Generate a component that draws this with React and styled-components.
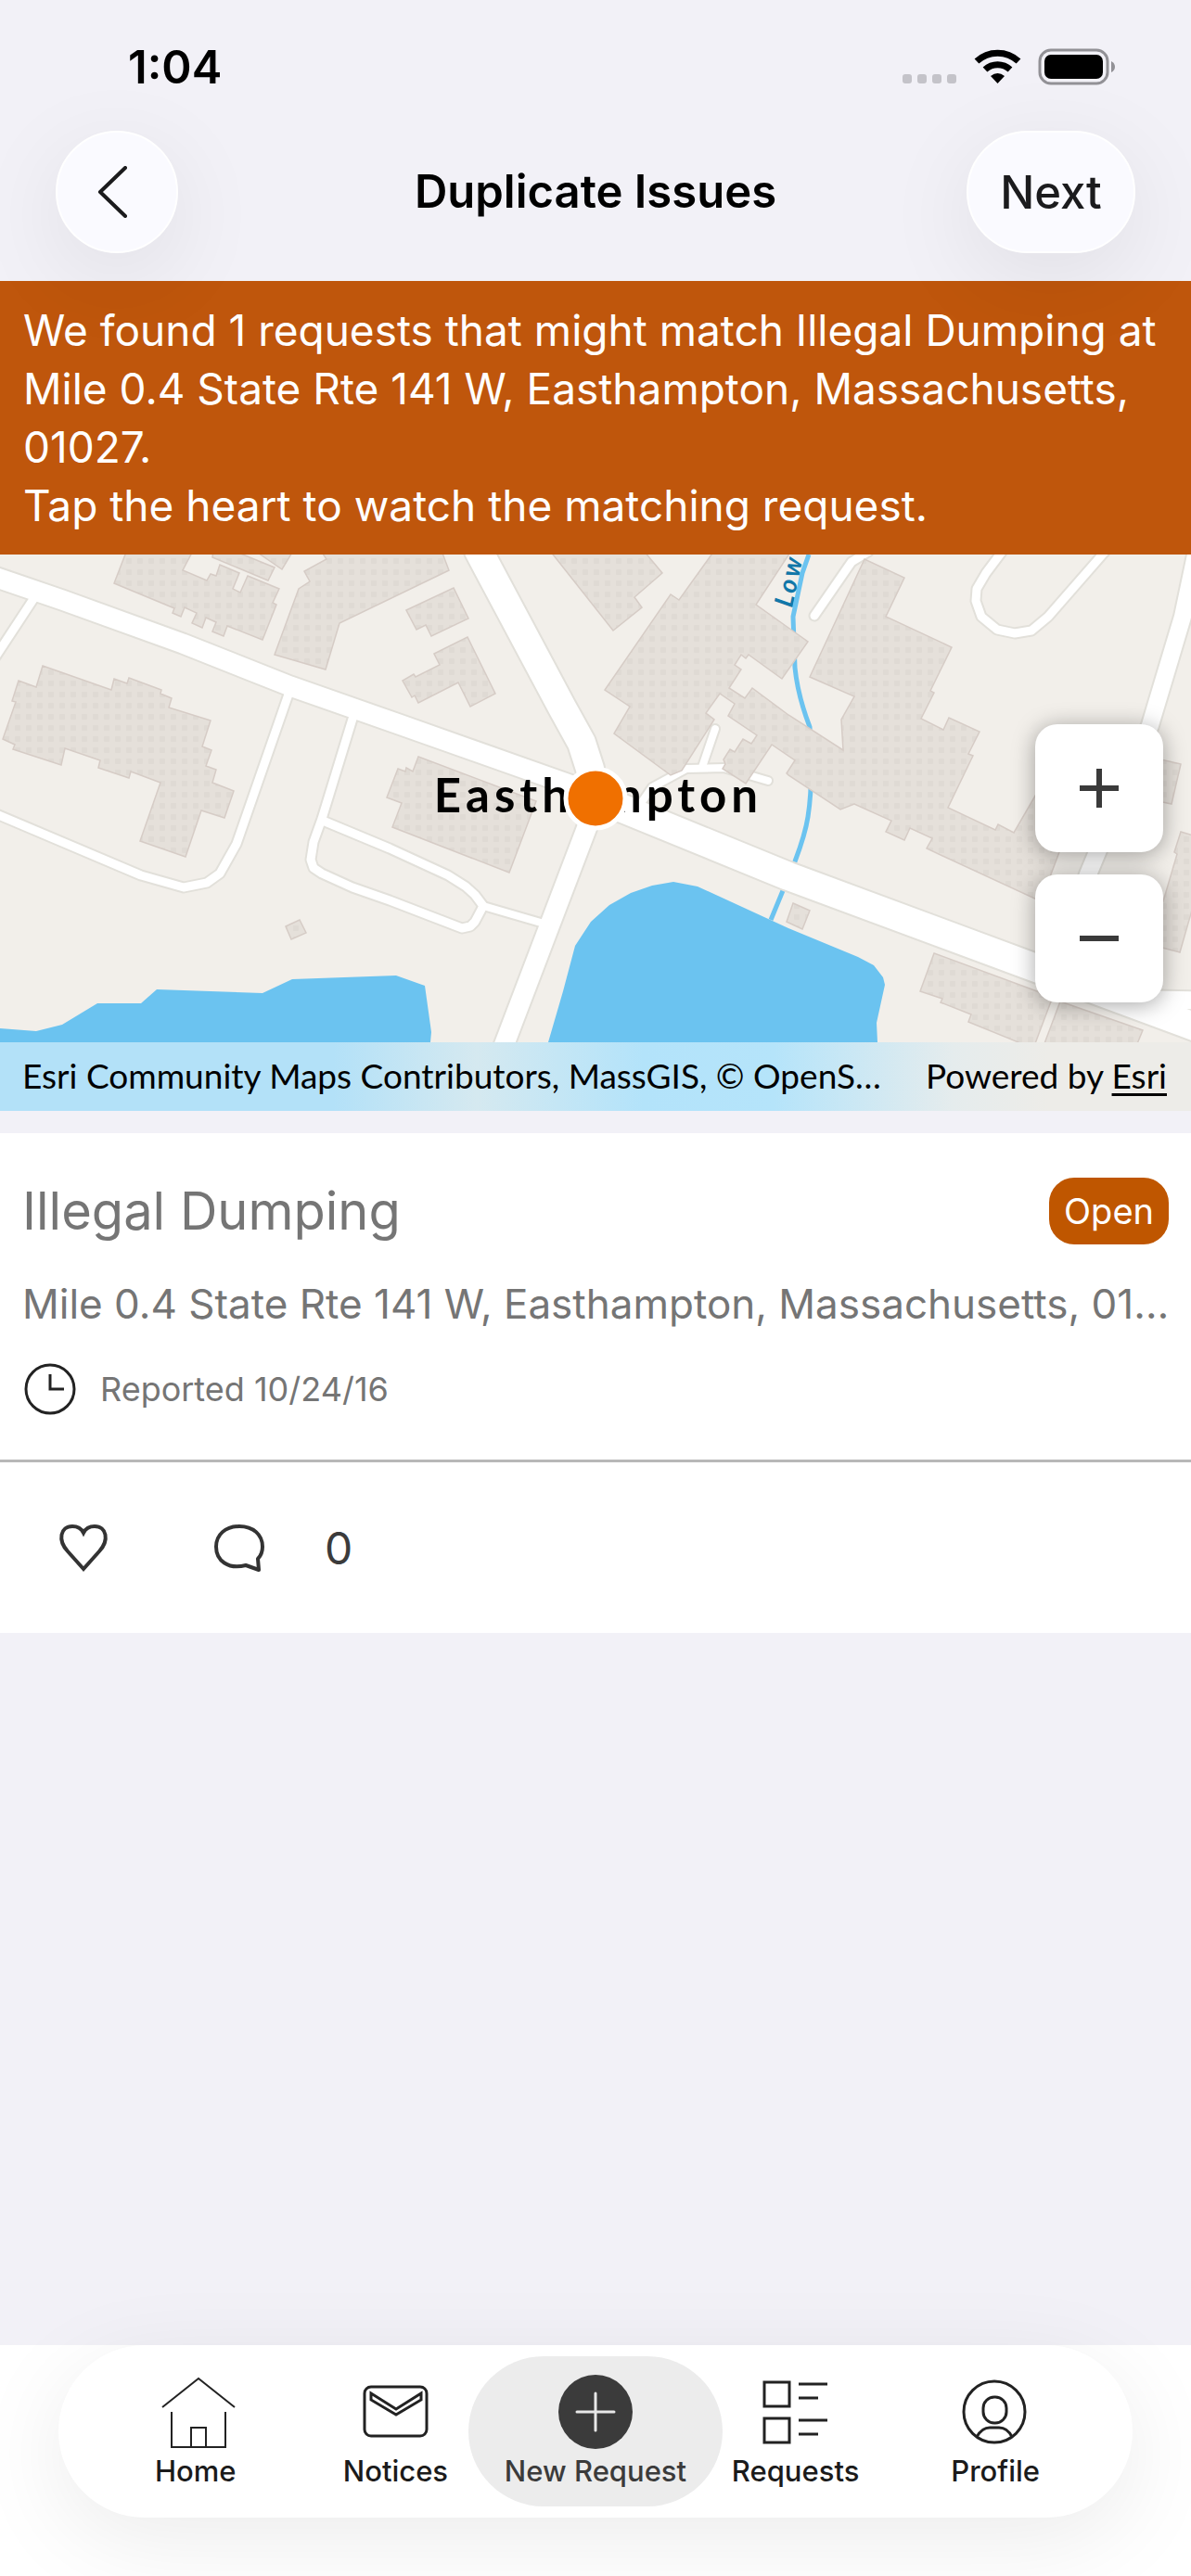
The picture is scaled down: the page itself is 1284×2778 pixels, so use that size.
import styled, { createGlobalStyle } from 'styled-components'

const tabs = [
    { id: 1, title: 'Home', icon: HomeIcon },
    { id: 2, title: 'Notices', icon: NoticesIcon },
    { id: 3, title: 'New Request', icon: PlusIcon, active: true },
    { id: 4, title: 'Requests', icon: RequestsIcon },
    { id: 5, title: 'Profile', icon: ProfileIcon },
]

const buildings = [
    '135,0 123,31 188,58 186,63 195,67 199,57 212,63 207,74 218,79 222,68 233,73 229,83 241,88 245,77 283,92 298,54 294,52 301,37 267,23 259,41 251,37 258,20 237,11 233,23 227,21 223,28 197,17 209,-6 137,-6',
    '230,-4 229,3 289,28 296,14 252,-4',
    '275,-4 304,16 316,-4',
    '346,-4 352,5 328,18 334,29 322,37 296,108 351,124 366,74 484,17 476,-4',
    '46,120 120,146 123,134 137,139 139,133 174,146 173,150 185,155 182,165 227,179 218,207 228,211 222,228 233,232 229,246 252,255 242,284 217,276 200,326 151,309 173,246 141,234 139,241 106,230 108,222 70,209 66,227 14,210 16,205 3,199 17,159 13,158 20,136 39,143',
    '308,401 323,394 330,408 314,415',
    '438,60 489,36 505,69 465,88 459,76 449,81',
    '468,107 504,89 534,150 507,164 494,138 451,160 447,152 444,154 434,136 446,129 448,132 474,119',
    '451,218 578,266 549,343 423,294 433,268 417,262 429,231 437,234 438,230 445,234',
    '593,-4 661,82 692,57 684,46 714,20 694,-4',
    '770,-4 732,49 723,43 652,146 679,164 662,193 723,238 735,233 770,178 761,171 776,150 792,161 785,174 816,195 810,204 801,199 792,213 787,210 780,221 782,226 779,231 804,247 832,205 857,222 848,236 850,238 906,275 921,269 961,287 955,299 975,308 981,295 1005,306 999,317 1122,374 1142,321 1168,255 1130,236 1093,300 1076,291 1073,297 1022,273 1049,217 1044,215 1056,191 1023,176 1017,189 993,177 1007,149 1003,147 1026,100 955,67 975,25 932,5 873,132 921,153 907,178 909,211 850,173 811,144 803,155 786,144 799,124 792,119 799,108 804,112 807,108 843,134 871,94 850,79 815,54 853,-4',
    '1230,216 1273,226 1263,269 1230,262',
    '1273,299 1290,304 1290,366 1272,429 1230,418 1254,374 1269,323 1266,321',
    '1007,430 1118,471 1133,482 1115,530 1100,530 1098,526 1044,504 1047,496 1014,483 1016,479 992,471',
    '1143,482 1232,513 1225,530 1125,530',
    '855,376 873,384 865,404 848,396',
]

const roads = [
    { d: 'M40 42 L-6 112', width: 9 },
    { d: 'M313 145 L255 312 L237 344 L223 354 L198 359 L152 346 L-6 279', width: 9 },
    { d: 'M381 174 L347 285 L338 310 L335 329 L338 338 L347 344 L380 359 L420 373 L498 403 L507 401 L512 396 L521 379 L512 367 L502 358 L483 346 L420 317 L348 287', width: 9 },
    { d: 'M521 379 L583 397', width: 8 },
    { d: 'M687 274 L703 251 L740 231 L780 230 L828 244', width: 8 },
    { d: 'M757 229 L771 188', width: 8 },
    { d: 'M878 66 L918 8 L936 -3', width: 9 },
    { d: 'M1081 -4 L1063 20 L1053 37 L1052 50 L1058 67 L1075 81 L1094 85 L1112 82 L1130 67 L1192 -4', width: 9 },
    { d: 'M1290 -4 L1275 67 L1240 184 L1173 345 L1140 440', width: 18 },
    { d: 'M1244 480 L1290 481', width: 19 },
    { d: 'M-6 24 L67 49 L197 96 L313 142 L430 183 L642 258', width: 21 },
    { d: 'M516 -4 L606 165 L627 203 L636 231 L642 262 L850 347 L1117 446 L1290 510', width: 30 },
    { d: 'M642 270 L543 530', width: 21 },
]

function HomeIcon() {
    return (
        <Icon viewBox="0 0 80 80" $stroke={2}>
            <path d="M4 35 L43 4 L82 35" />
            <path d="M14 40 V78 H72 V40" />
            <path d="M35 78 V57 H51 V78" />
        </Icon>
    )
}

function NoticesIcon() {
    return (
        <Icon viewBox="0 0 80 80" $stroke={3}>
            <rect x="7" y="13" width="67" height="53" rx="7" />
            <path d="M14 20 L41 37 L68 20 V27 L41 43 L14 27 Z" />
        </Icon>
    )
}

function PlusIcon() {
    return (
        <Icon viewBox="0 0 80 80" $stroke={3}>
            <circle cx="40" cy="40" r="40" fill="#3b3b3b" stroke="none" />
            <path d="M20 40 H60 M40 20 V60" stroke="#e8e8e8" strokeLinecap="round" />
        </Icon>
    )
}

function RequestsIcon() {
    return (
        <Icon viewBox="0 0 80 80" $stroke={3}>
            <path d="M6 8 H33 V34 H6 Z M6 47 H33 V73 H6 Z" />
            <path d="M43 10 H74 M43 25 H64 M43 49 H74 M43 64 H64" />
        </Icon>
    )
}

function ProfileIcon() {
    return (
        <Icon viewBox="0 0 80 80" $stroke={3}>
            <circle cx="39" cy="40" r="33" />
            <rect x="27" y="24" width="25" height="28" rx="12" />
            <path d="M20 67 C24 60 28 57 34 57 H44 C50 57 55 61 58 67" />
        </Icon>
    )
}

function StatusBar() {
    return (
        <StatusRow>
            <Time>1:04</Time>
            <svg width="230" height="40" viewBox="0 0 230 40">
                <g fill="#c4c3c9">
                    <rect x="0" y="28" width="10" height="10" rx="3" />
                    <rect x="16" y="28" width="10" height="10" rx="3" />
                    <rect x="32" y="28" width="10" height="10" rx="3" />
                    <rect x="48" y="28" width="10" height="10" rx="3" />
                </g>
                <g fill="none" stroke="#000" strokeWidth="7">
                    <path d="M80 14 A33 33 0 0 1 125 14" />
                    <path d="M89 23 A20 20 0 0 1 116 23" />
                </g>
                <path d="M95 30 Q102.500 24 110 30 L102.500 38 Z" />
                <rect x="148" y="2" width="73" height="36" rx="12" fill="none" stroke="#929196" strokeWidth="3" />
                <rect x="153" y="7" width="63" height="26" rx="7" />
                <path d="M225 14 Q229 16 229 20 Q229 24 225 26 Z" fill="#929196" />
            </svg>
        </StatusRow>
    )
}

function MapView() {
    return (
        <MapBox>
            <MapDrawing viewBox="0 0 1284 526" preserveAspectRatio="xMidYMid slice">
                <defs>
                    <pattern id="dots" width="12" height="12" patternUnits="userSpaceOnUse">
                        <rect width="12" height="12" fill="#e5e0da" />
                        <rect x="4" y="4" width="6" height="6" rx="1" fill="#dfdad4" />
                    </pattern>
                </defs>
                <rect width="1284" height="526" fill="#f2efea" />
                <g fill="#6bc3f0">
                    <path d="M0 511 L39 514 L67 507 L105 484 L152 484 L169 469 L283 473 L315 458 L427 454 L458 465 L465 515 L464 526 L0 526 Z" />
                    <path d="M591 526 L607 471 L620 422 L637 396 L657 378 L680 365 L703 357 L726 353 L752 358 L850 403 L925 434 L942 443 L952 456 L954 464 L945 505 L946 526 Z" />
                </g>
                <path d="M872 0 L865 20 L855 67 L857 122 Q860 152 873 186 Q877 245 871 283 Q868 302 857 331 L831 394" fill="none" stroke="#6bc3f0" strokeWidth="5" />
                <g fill="none" stroke="#e2e0da" strokeLinecap="round" strokeLinejoin="round">
                    {roads.map((road) => <path key={road.d} d={road.d} strokeWidth={road.width + 4} />)}
                </g>
                <g fill="none" stroke="#fff" strokeLinecap="round" strokeLinejoin="round">
                    {roads.map((road) => <path key={road.d} d={road.d} strokeWidth={road.width} />)}
                </g>
                <g fill="url(#dots)" stroke="#d6ccc6" strokeWidth="1.500">
                    {buildings.map((points) => <polygon key={points} points={points} />)}
                </g>
                <RiverLabel x="854" y="58" transform="rotate(-78 854 58)">Low</RiverLabel>
                <TownLabel x="645" y="278" textAnchor="middle">Easthampton</TownLabel>
                <circle cx="642" cy="263" r="32" fill="#f07000" stroke="#fff" strokeWidth="5" />
            </MapDrawing>
            <ZoomControls>
                <ZoomButton aria-label="Zoom in">
                    <svg width="42" height="42" viewBox="0 0 42 42" stroke="#3a3a3a" strokeWidth="6">
                        <path d="M0 21 H42 M21 0 V42" />
                    </svg>
                </ZoomButton>
                <ZoomButton aria-label="Zoom out">
                    <svg width="42" height="42" viewBox="0 0 42 42" stroke="#3a3a3a" strokeWidth="6">
                        <path d="M0 21 H42" />
                    </svg>
                </ZoomButton>
            </ZoomControls>
            <Attribution>
                <span>Esri Community Maps Contributors, MassGIS, © OpenS…</span>
                <span>Powered by <a href="#esri">Esri</a></span>
            </Attribution>
        </MapBox>
    )
}

function RequestCard() {
    return (
        <Card>
            <CardBody>
                <CardTop>
                    <CardTitle>Illegal Dumping</CardTitle>
                    <Badge>Open</Badge>
                </CardTop>
                <Address>Mile 0.4 State Rte 141 W, Easthampton, Massachusetts, 01…</Address>
                <Reported>
                    <svg width="56" height="56" viewBox="0 0 56 56" fill="none" stroke="#222" strokeWidth="3">
                        <circle cx="28" cy="28" r="26" />
                        <path d="M28 12 V28 H43" />
                    </svg>
                    <span>Reported 10/24/16</span>
                </Reported>
            </CardBody>
            <CardActions>
                <IconButton aria-label="Watch request">
                    <svg width="56" height="56" viewBox="0 0 56 56" fill="none" stroke="#333" strokeWidth="4">
                        <path d="M28 51 L11 32 C0 20 3 5 16 5 C22 5 26 8 28 12 C30 8 34 5 40 5 C53 5 56 20 45 32 Z" />
                    </svg>
                </IconButton>
                <IconButton aria-label="Comments">
                    <svg width="56" height="56" viewBox="0 0 56 56" fill="none" stroke="#333" strokeWidth="4" strokeLinejoin="round">
                        <path d="M35 47 C16 52 3 42 3 27 C3 14 13 5 28 5 C43 5 53 14 53 27 C53 32 51 37 48 40 L49 52 Z" />
                    </svg>
                    <span>0</span>
                </IconButton>
            </CardActions>
        </Card>
    )
}

function App() {
    return (
        <Page>
            <GlobalStyle />
            <Header>
                <StatusBar />
                <NavBar>
                    <BackButton aria-label="Back">
                        <svg width="34" height="56" viewBox="0 0 34 56" fill="none" stroke="#1b1b1d" strokeWidth="4" strokeLinecap="round" strokeLinejoin="round">
                            <path d="M31 2 L4 28 L31 54" />
                        </svg>
                    </BackButton>
                    <h1>Duplicate Issues</h1>
                    <NextButton>Next</NextButton>
                </NavBar>
            </Header>
            <Banner>
                <p>We found 1 requests that might match Illegal Dumping at Mile 0.4 State Rte 141 W, Easthampton, Massachusetts, 01027.</p>
                <p>Tap the heart to watch the matching request.</p>
            </Banner>
            <MapView />
            <RequestCard />
            <TabBar>
                <TabList>
                    {tabs.map(({ id, title, icon: TabIcon, active }) => (
                        <Tab key={id} href={`#tab-${id}`} $active={active}>
                            <TabIcon />
                            <span>{title}</span>
                        </Tab>
                    ))}
                </TabList>
            </TabBar>
        </Page>
    )
}

const GlobalStyle = createGlobalStyle`
    * {
        box-sizing: border-box;
    }

    body, h1, h2, p {
        margin: 0;
    }

    body {
        background: #f2f1f7;
        font-family: Inter, Roboto, sans-serif;
    }

    button {
        border: none;
        background: none;
        padding: 0;
        font: inherit;
        cursor: pointer;
    }
`

const Page = styled.div`
    display: flex;
    flex-direction: column;
    min-height: 100vh;
`

const Header = styled.header`
    position: relative;
    z-index: 1;
    padding: 42px 60px 30px;
`

const StatusRow = styled.div`
    display: flex;
    justify-content: space-between;
    align-items: center;
    height: 60px;
    margin-bottom: 39px;
    padding: 0 21px 0 78px;
`

const Time = styled.span`
    font-size: 49px;
    font-weight: 600;
`

const NavBar = styled.nav`
    display: grid;
    grid-template-columns: 1fr auto 1fr;
    align-items: center;

    h1 {
        font-size: 49px;
        line-height: 60px;
        font-weight: 600;
    }
`

const GlassButton = styled.button`
    display: flex;
    align-items: center;
    justify-content: center;
    height: 132px;
    border: 2px solid #fff;
    border-radius: 66px;
    background: #fafaff;
    box-shadow: 0 24px 100px rgba(0, 0, 0, 0.08);
`

const BackButton = styled(GlassButton)`
    width: 132px;
    padding-right: 10px;
`

const NextButton = styled(GlassButton)`
    justify-self: end;
    width: 182px;
    color: #1b1b1d;
    font-size: 49px;
    font-weight: 500;
`

const Banner = styled.section`
    padding: 22px 25px 21px;
    background: #bf560c;
    color: #fff;
    font-size: 46px;
    line-height: 63px;
`

const MapBox = styled.section`
    position: relative;
`

const MapDrawing = styled.svg`
    display: block;
    width: 100%;
    height: 526px;
`

const TownLabel = styled.text`
    font: 700 51px Lato, sans-serif;
    letter-spacing: 5px;
`

const RiverLabel = styled.text`
    font: italic 700 28px Lato, sans-serif;
    letter-spacing: 3px;
    fill: #1177a8;
`

const ZoomControls = styled.div`
    position: absolute;
    top: 183px;
    right: 30px;
    display: flex;
    flex-direction: column;
    gap: 24px;
`

const ZoomButton = styled.button`
    display: flex;
    align-items: center;
    justify-content: center;
    width: 138px;
    height: 138px;
    border-radius: 24px;
    background: #fff;
    box-shadow: 0 3px 24px rgba(0, 0, 0, 0.35);
`

const Attribution = styled.div`
    display: flex;
    justify-content: space-between;
    align-items: center;
    height: 74px;
    padding: 0 26px 4px 24px;
    background: linear-gradient(90deg, #b3e1f8 0%, #b3e1f8 28%, #d5e9f0 40%, #b3e3fa 54%, #b5e4fa 65%, #e5eced 80%, #edece8 88%);
    font-family: Lato, sans-serif;
    font-size: 37px;
    white-space: nowrap;

    a {
        color: inherit;
        text-underline-offset: 5px;
    }
`

const Card = styled.article`
    margin-top: 24px;
    background: #fff;
    color: #757575;
`

const CardBody = styled.div`
    display: flex;
    flex-direction: column;
    padding: 48px 24px;
    border-bottom: 3px solid #b8b8b8;
`

const CardTop = styled.div`
    display: flex;
    justify-content: space-between;
    align-items: center;
    height: 72px;
`

const CardTitle = styled.h2`
    font-size: 56px;
    font-weight: 400;
`

const Badge = styled.span`
    padding: 0 16px;
    border-radius: 27px;
    background: #bf5600;
    color: #fff;
    font-size: 38px;
    line-height: 72px;
`

const Address = styled.p`
    margin: 34px 0;
    font-size: 44px;
    line-height: 60px;
    white-space: nowrap;
`

const Reported = styled.div`
    display: flex;
    align-items: center;
    gap: 26px;
    padding-left: 2px;
    font-size: 36px;
`

const CardActions = styled.div`
    display: flex;
    align-items: center;
    gap: 112px;
    height: 184px;
    padding: 0 62px;
`

const IconButton = styled.button`
    display: flex;
    align-items: center;
    gap: 64px;
    color: #3b3b3b;
    font-size: 48px;
`

const TabBar = styled.footer`
    height: 249px;
    margin-top: auto;
    padding: 0 63px;
    background: #fff;
`

const TabList = styled.nav`
    display: flex;
    padding: 12px 40px;
    border-radius: 93px;
    background: #fff;
    box-shadow: 0 24px 100px rgba(0, 0, 0, 0.08);
`

const Tab = styled.a`
    display: flex;
    flex: 1 1 0;
    flex-direction: column;
    align-items: center;
    gap: 6px;
    height: 162px;
    padding-top: 20px;
    border-radius: 81px;
    color: #1b1b1b;
    font-size: 31px;
    line-height: 36px;
    font-weight: 500;
    text-decoration: none;
    white-space: nowrap;
    ${({ $active }) => $active && `
        flex-basis: 58px;
        margin: 0 -29px;
        background: #ececec;
        color: #3b3b3b;
    `}
`

const Icon = styled.svg`
    flex: none;
    width: 80px;
    height: 80px;
    overflow: visible;
    fill: none;
    stroke: #222;
    stroke-width: ${({ $stroke }) => $stroke};
`

export default App
